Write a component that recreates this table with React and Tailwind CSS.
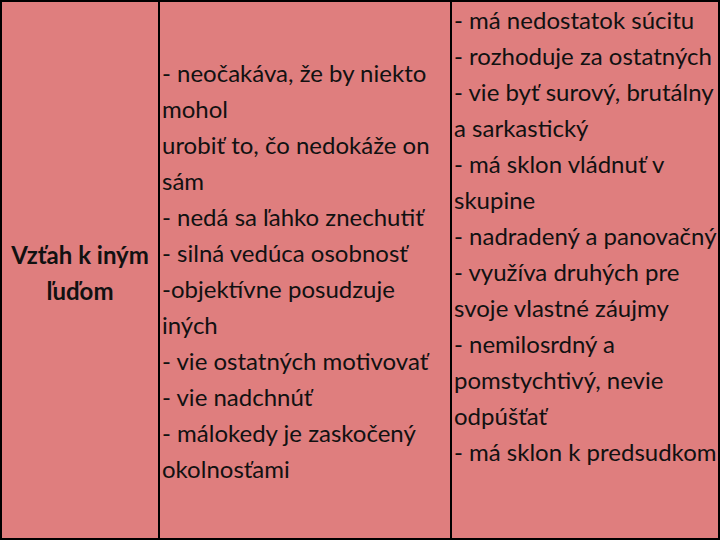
export default function App() {
  const col2 = [
    "- neočakáva, že by niekto",
    "mohol",
    "urobiť to, čo nedokáže on",
    "sám",
    "- nedá sa ľahko znechutiť",
    "- silná vedúca osobnosť",
    "-objektívne posudzuje",
    "iných",
    "- vie ostatných motivovať",
    "- vie nadchnúť",
    "- málokedy je zaskočený",
    "okolnosťami",
  ];
  const col3 = [
    "- má nedostatok súcitu",
    "- rozhoduje za ostatných",
    "- vie byť surový, brutálny",
    "a sarkastický",
    "- má sklon vládnuť v",
    "skupine",
    "- nadradený a panovačný",
    "- využíva druhých pre",
    "svoje vlastné záujmy",
    "- nemilosrdný a",
    "pomstychtivý, nevie",
    "odpúšťať",
    "- má sklon k predsudkom",
  ];
  return (
    <div
      className="w-[720px] h-[540px] bg-[#df7e7e] text-[#111] flex border-2 border-black overflow-hidden"
      style={{ fontFamily: "Lato, 'Open Sans', sans-serif" }}
    >
      <div className="w-[156px] shrink-0 flex flex-col items-center justify-center text-[24px] leading-[36px] font-bold pt-[6px]">
        <div>Vzťah k iným</div>
        <div>ľuďom</div>
      </div>
      <div className="w-[2px] bg-black shrink-0" />
      <div className="w-[290px] shrink-0 flex flex-col justify-center pl-[2px] text-[24px] leading-[36px] whitespace-nowrap pt-[2px]">
        {col2.map((t, i) => (
          <div key={i}>{t}</div>
        ))}
      </div>
      <div className="w-[2px] bg-black shrink-0" />
      <div className="flex-1 flex flex-col pl-[2px] text-[24px] leading-[36px] whitespace-nowrap">
        {col3.map((t, i) => (
          <div key={i}>{t}</div>
        ))}
      </div>
    </div>
  );
}
